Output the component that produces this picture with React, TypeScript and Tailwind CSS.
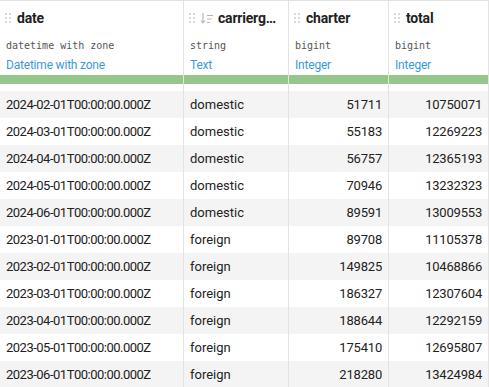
const columns = [
  { name: "date", type: "datetime with zone", label: "Datetime with zone", sorted: false },
  { name: "carrierg…", type: "string", label: "Text", sorted: true },
  { name: "charter", type: "bigint", label: "Integer", sorted: false },
  { name: "total", type: "bigint", label: "Integer", sorted: false },
];

const rows: [string, string, number, number][] = [
  ["2024-02-01T00:00:00.000Z", "domestic", 51711, 10750071],
  ["2024-03-01T00:00:00.000Z", "domestic", 55183, 12269223],
  ["2024-04-01T00:00:00.000Z", "domestic", 56757, 12365193],
  ["2024-05-01T00:00:00.000Z", "domestic", 70946, 13232323],
  ["2024-06-01T00:00:00.000Z", "domestic", 89591, 13009553],
  ["2023-01-01T00:00:00.000Z", "foreign", 89708, 11105378],
  ["2023-02-01T00:00:00.000Z", "foreign", 149825, 10468866],
  ["2023-03-01T00:00:00.000Z", "foreign", 186327, 12307604],
  ["2023-04-01T00:00:00.000Z", "foreign", 188644, 12292159],
  ["2023-05-01T00:00:00.000Z", "foreign", 175410, 12695807],
  ["2023-06-01T00:00:00.000Z", "foreign", 218280, 13424984],
];

const grid = "grid grid-cols-[184px_105px_100px_100px]";

function Grip() {
  return (
    <svg width="6" height="10" viewBox="0 0 6 10" className="shrink-0 text-[#d9d9d9]" fill="currentColor">
      <rect x="0" y="0" width="2" height="2" />
      <rect x="4" y="0" width="2" height="2" />
      <rect x="0" y="4" width="2" height="2" />
      <rect x="4" y="4" width="2" height="2" />
      <rect x="0" y="8" width="2" height="2" />
      <rect x="4" y="8" width="2" height="2" />
    </svg>
  );
}

function SortIcon() {
  return (
    <svg width="14" height="12" viewBox="0 0 14 12" fill="none" stroke="#b5b5b5" strokeWidth="1.1" className="shrink-0 ml-[5px]">
      <path d="M3 1v10M0.8 8.5L3 11l2.2-2.5" />
      <path d="M7 3.5h6M7 7h4.5M7 10.5h3" />
    </svg>
  );
}

export default function App() {
  return (
    <div className="w-[489px] h-[387px] overflow-hidden bg-white text-[#222] font-['Roboto',sans-serif] text-[13px] tracking-[-0.5px] border-t border-[#e3e3e3]">
      <div className={grid}>
        {columns.map((c) => (
          <div key={c.name} className="border-r border-[#e3e3e3] flex flex-col min-w-0">
            <div className="h-[34px] flex items-center px-[5px]">
              <Grip />
              {c.sorted && <SortIcon />}
              <span className={`${c.sorted ? "ml-[4px]" : "ml-[6px]"} font-bold text-[14px] tracking-[-0.2px] whitespace-nowrap`}>
                {c.name}
              </span>
            </div>
            <div className="px-[6px] h-[20px] flex items-center font-['DejaVu_Sans_Mono',monospace] text-[10px] tracking-normal text-[#555]">
              {c.type}
            </div>
            <div className="px-[6px] h-[20px] flex items-center text-[12px] tracking-[-0.2px] text-[#3a9ad9]">{c.label}</div>
            <div className="h-[9px] bg-[#95c78b]" />
            <div className="h-[7px]" />
          </div>
        ))}
      </div>
      {rows.map((r, i) => (
        <div key={i} className={`${grid} h-[27px] whitespace-nowrap ${i % 2 === 0 ? "bg-[#f4f4f4]" : "bg-white"}`}>
          <div className="border-r border-[#e3e3e3] px-[6px] flex items-center overflow-hidden">{r[0]}</div>
          <div className="border-r border-[#e3e3e3] px-[6px] flex items-center overflow-hidden tracking-normal">{r[1]}</div>
          <div className="border-r border-[#e3e3e3] px-[6px] flex items-center justify-end overflow-hidden tracking-[-0.2px]">{r[2]}</div>
          <div className="border-r border-[#e3e3e3] px-[6px] flex items-center justify-end overflow-hidden tracking-[-0.2px]">{r[3]}</div>
        </div>
      ))}
    </div>
  );
}
